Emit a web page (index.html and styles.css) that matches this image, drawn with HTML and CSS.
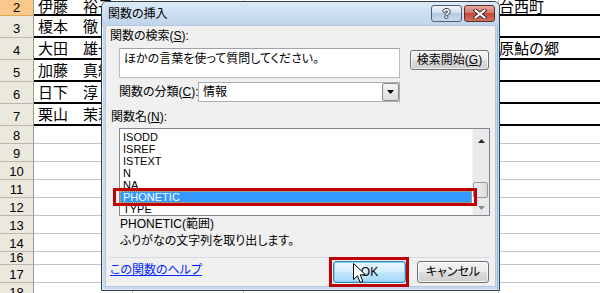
FILE: index.html
```html
<!DOCTYPE html>
<html lang="ja">
<head>
<meta charset="utf-8">
<title>関数の挿入</title>
<link rel="stylesheet" href="styles.css">
</head>
<body>
<div class="sheet">
  <div class="row data first"><div class="rh sel">2</div><div class="c c1">伊藤　裕子</div><div class="c c2"></div><div class="c c3"></div><div class="c c4">台西町</div></div>
  <div class="row data"><div class="rh">3</div><div class="c c1">榎本　徹</div><div class="c c2"></div><div class="c c3"></div><div class="c c4"></div></div>
  <div class="row data"><div class="rh">4</div><div class="c c1">大田　雄一</div><div class="c c2"></div><div class="c c3"></div><div class="c c4">原鮎の郷</div></div>
  <div class="row data"><div class="rh">5</div><div class="c c1">加藤　真紀</div><div class="c c2"></div><div class="c c3"></div><div class="c c4"></div></div>
  <div class="row data"><div class="rh">6</div><div class="c c1">日下　淳</div><div class="c c2"></div><div class="c c3"></div><div class="c c4"></div></div>
  <div class="row data"><div class="rh">7</div><div class="c c1">栗山　茉莉</div><div class="c c2"></div><div class="c c3"></div><div class="c c4"></div></div>
  <div class="row"><div class="rh">8</div><div class="c c1"></div><div class="c c2"></div><div class="c c3"></div><div class="c c4"></div></div>
  <div class="row"><div class="rh">9</div><div class="c c1"></div><div class="c c2"></div><div class="c c3"></div><div class="c c4"></div></div>
  <div class="row"><div class="rh">10</div><div class="c c1"></div><div class="c c2"></div><div class="c c3"></div><div class="c c4"></div></div>
  <div class="row"><div class="rh">11</div><div class="c c1"></div><div class="c c2"></div><div class="c c3"></div><div class="c c4"></div></div>
  <div class="row"><div class="rh">12</div><div class="c c1"></div><div class="c c2"></div><div class="c c3"></div><div class="c c4"></div></div>
  <div class="row"><div class="rh">13</div><div class="c c1"></div><div class="c c2"></div><div class="c c3"></div><div class="c c4"></div></div>
  <div class="row"><div class="rh">14</div><div class="c c1"></div><div class="c c2"></div><div class="c c3"></div><div class="c c4"></div></div>
  <div class="row short"><div class="rh">16</div><div class="c c1"></div><div class="c c2"></div><div class="c c3"></div><div class="c c4"></div></div>
  <div class="row"><div class="rh">17</div><div class="c c1"></div><div class="c c2"></div><div class="c c3"></div><div class="c c4"></div></div>
  <div class="row"><div class="rh">18</div><div class="c c1"></div><div class="c c2"></div><div class="c c3"></div><div class="c c4"></div></div>
</div>

<div class="dialog">
  <div class="titlebar">
    <span class="title">関数の挿入</span>
    <div class="tbtns">
      <span class="tb help">?</span>
      <span class="tb close"><svg width="14" height="10" viewBox="0 0 14 10"><path d="M2.5 1.5 L11.5 8.5 M11.5 1.5 L2.5 8.5" stroke="#3a2a2a" stroke-width="4" stroke-linecap="square"/><path d="M2.5 1.5 L11.5 8.5 M11.5 1.5 L2.5 8.5" stroke="#fff" stroke-width="2" stroke-linecap="square"/></svg></span>
    </div>
  </div>
  <div class="client">
    <div class="lbl l1">関数の検索(<u>S</u>):</div>
    <div class="search-row">
      <div class="textbox">ほかの言葉を使って質問してください。</div>
      <div class="btn go">検索開始(<u>G</u>)</div>
    </div>
    <div class="cat-row">
      <span class="lbl catlbl">関数の分類(<u>C</u>):</span>
      <div class="select"><span class="selval">情報</span><span class="drop"><svg width="7" height="4" viewBox="0 0 7 4"><path d="M0 0 H7 L3.5 4 Z" fill="#000"/></svg></span></div>
    </div>
    <div class="lbl l2">関数名(<u>N</u>):</div>
    <div class="listbox">
      <div class="items">
        <div class="item">ISODD</div>
        <div class="item">ISREF</div>
        <div class="item">ISTEXT</div>
        <div class="item">N</div>
        <div class="item">NA</div>
        <div class="item selected">PHONETIC</div>
        <div class="item">TYPE</div>
      </div>
      <div class="vscroll">
        <div class="sbtn up"><svg width="7" height="4" viewBox="0 0 7 4"><path d="M0 4 H7 L3.5 0 Z" fill="#2a2a2a"/></svg></div>
        <div class="track"><div class="thumb"></div></div>
        <div class="sbtn down"><svg width="7" height="4" viewBox="0 0 7 4"><path d="M0 0 H7 L3.5 4 Z" fill="#8a8a8a"/></svg></div>
      </div>
    </div>
    <div class="desc">PHONETIC(範囲)<br>ふりがなの文字列を取り出します。</div>
    <div class="sep"></div>
    <div class="foot">
      <span class="helplink">この関数のヘルプ</span>
      <div class="btn ok">OK</div>
      <div class="btn cancel">キャンセル</div>
    </div>
  </div>
</div>

<div class="mark mark-list"></div>
<div class="mark mark-ok"></div>
<svg class="cursor" width="14" height="21" viewBox="0 0 14 21"><path d="M0.5 0.5 L0.5 16.5 L4.5 12.8 L7.2 19.5 L9.8 18.4 L7.2 11.8 L12.5 11.8 Z" fill="#fff" stroke="#000" stroke-width="1" stroke-linejoin="miter"/></svg>
</body>
</html>
```

FILE: styles.css
```css
* { box-sizing: border-box; }
html, body { margin: 0; padding: 0; }
body {
  width: 600px;
  height: 293px;
  overflow: hidden;
  position: relative;
  background: #fff;
  font-family: "Liberation Sans", "Noto Sans CJK JP", sans-serif;
  color: #000;
}

/* ---------- spreadsheet ---------- */
.sheet { display: flex; flex-direction: column; width: 600px; }
.row { display: flex; height: 18px; flex: none; }
.row.data { height: 22px; }
.row.first { height: 16px; }
.row.short { height: 13px; }

.rh {
  width: 34px;
  flex: none;
  background: #ebe9de;
  border-right: 1px solid #9e9b8c;
  border-bottom: 1px solid #bdb9a6;
  font-size: 13px;
  line-height: 14px;
  text-align: center;
  padding-top: 3px;
}
.row.data .rh { padding-top: 6px; }
.row.first .rh { padding-top: 1px; }
.row.short .rh { padding-top: 0; line-height: 12px; font-size: 12.5px; }
.rh.sel { background: #f8c98b; border-bottom-color: #e2a85a; }

.c {
  border-bottom: 1px solid #c4c4c4;
  border-right: 1px solid #c4c4c4;
  font-family: "Noto Sans CJK JP", sans-serif;
  font-size: 15px;
  line-height: 20px;
  white-space: nowrap;
  overflow: hidden;
  display: flex;
  align-items: center;
}
.row.data .c { border-bottom: 2px solid #000; }
.row.first .c { align-items: flex-end; line-height: 17px; }
.c1 { width: 99px; padding-left: 4px; flex: none; }
.c2 { width: 111px; flex: none; }
.c3 { width: 255px; flex: none; }
.c4 { flex: 1; border-right: none; padding-left: 0; }

/* ---------- dialog ---------- */
.dialog {
  position: absolute;
  left: 101px;
  top: 1px;
  width: 399px;
  height: 290px;
  border: 1px solid #34404c;
  border-radius: 6px 6px 0 0;
  background: #c6d9ee;
  box-shadow: inset 0 0 0 1px rgba(255,255,255,0.55), inset -2px 0 0 #7fbde6;
  padding: 0 4px 4px 4px;
  display: flex;
  flex-direction: column;
  font-size: 12px;
  font-feature-settings: "palt";
}
.titlebar {
  height: 24px;
  flex: none;
  margin: 0 -4px;
  padding: 0 4px 0 6px;
  display: flex;
  align-items: flex-start;
  justify-content: space-between;
  background: linear-gradient(#dce8f5, #bed4eb);
  border-radius: 5px 5px 0 0;
}
.title { line-height: 12px; margin-top: 5px; font-family: "Noto Sans CJK JP", sans-serif; }
.tbtns { display: flex; gap: 2px; margin-top: 3px; }
.tb {
  width: 31px;
  height: 17px;
  border: 1px solid #4f5d6d;
  border-radius: 3px;
  display: flex;
  align-items: center;
  justify-content: center;
}
.help {
  background: linear-gradient(#eef3fa 0%, #d3e1f0 45%, #b3c9e1 50%, #c9daec 100%);
  color: #fff;
  font-weight: bold;
  font-size: 13px;
  line-height: 13px;
  text-shadow: 1px 0 0 #2f3c4a, -1px 0 0 #2f3c4a, 0 1px 0 #2f3c4a, 0 -1px 0 #2f3c4a;
}
.close {
  border-color: #5a2a26;
  background: linear-gradient(#e8a89d 0%, #d47a6d 45%, #c24a3c 50%, #d5705f 100%);
}

.client {
  flex: 1;
  background: #f0f0f0;
  padding-top: 4px;
  display: flex;
  flex-direction: column;
  box-shadow: 0 0 0 1px #b5c8dc;
}
.lbl { line-height: 12px; white-space: nowrap; }
.l1 { margin-left: 4px; }
.search-row { display: flex; margin-top: 6px; height: 30px; flex: none; }
.textbox {
  margin-left: 13px;
  width: 281px;
  height: 30px;
  background: #fff;
  border: 1px solid #b7bcc4;
  border-top-color: #9ea3ab;
  padding: 4px 0 0 4px;
  line-height: 12px;
}
.btn {
  display: flex;
  align-items: center;
  justify-content: center;
  border: 1px solid #707070;
  border-radius: 3px;
  background: linear-gradient(#f3f3f3 0%, #ebebeb 48%, #dddddd 52%, #cfcfcf 100%);
  box-shadow: inset 0 0 0 1px rgba(255,255,255,0.7);
  white-space: nowrap;
  line-height: 12px;
}
.go { margin-left: 10px; margin-top: 2px; width: 79px; height: 20px; }

.cat-row { display: flex; margin-top: 4px; height: 20px; flex: none; }
.catlbl { margin-left: 13px; width: 79px; line-height: 20px; }
.select {
  width: 202px;
  height: 20px;
  background: #fff;
  border: 1px solid #a9aeb6;
  display: flex;
  justify-content: space-between;
}
.selval { line-height: 18px; padding-left: 4px; }
.drop {
  width: 17px;
  height: 18px;
  border: 1px solid #8b8b8b;
  border-radius: 2px;
  background: linear-gradient(#f4f4f4, #dcdcdc);
  display: flex;
  align-items: center;
  justify-content: center;
}

.l2 { margin-left: 5px; margin-top: 9px; }
.listbox {
  margin-left: 13px;
  margin-top: 5px;
  width: 371px;
  height: 88px;
  flex: none;
  background: #fff;
  border: 1px solid #828790;
  display: flex;
}
.items {
  flex: 1;
  padding-top: 2px;
  font-family: "Liberation Sans", sans-serif;
  font-size: 11px;
}
.item { height: 12px; line-height: 12px; padding-left: 3px; }
.item.selected {
  background: #3399ff;
  color: #fff;
  outline: 1px dotted #f0a030;
  outline-offset: -1px;
}
.vscroll {
  width: 17px;
  flex: none;
  background: #eaeaea;
  border-left: 1px solid #f6f6f6;
  display: flex;
  flex-direction: column;
}
.sbtn { height: 17px; display: flex; align-items: center; justify-content: center; flex: none; }
.sbtn.up { padding-top: 6px; }
.sbtn.down { padding-top: 2px; }
.track { flex: 1; display: flex; flex-direction: column; justify-content: flex-end; }
.thumb {
  height: 16px;
  width: 15px;
  border: 1px solid #979797;
  border-radius: 2px;
  background: linear-gradient(90deg, #f2f2f2, #dcdcdc);
}

.desc { margin-left: 14px; line-height: 17px; font-family: "Liberation Sans", "Noto Sans CJK JP", sans-serif; }
.sep {
  margin-top: 7px;
  margin-left: 4px;
  width: 380px;
  height: 1px;
  flex: none;
  background: #cfdae4;
}
.foot { display: flex; margin-top: 3px; height: 22px; flex: none; }
.helplink {
  color: #0026ff;
  text-decoration: underline;
  margin-left: 4px;
  margin-top: 3px;
  line-height: 12px;
}
.ok {
  margin-left: auto;
  width: 73px;
  height: 22px;
  border-color: #3c7fb1;
  background: linear-gradient(#eaf6fd 0%, #d9f0fc 45%, #bee6fd 55%, #a7d9f5 100%);
  box-shadow: inset 0 0 0 1px #7fd0f8;
}
.cancel { margin-left: 11px; margin-right: 6px; width: 72px; height: 22px; }

/* ---------- annotations ---------- */
.mark { position: absolute; border: 3px solid #c00000; }
.mark-list { left: 113px; top: 188px; width: 364px; height: 18px; }
.mark-ok { left: 329px; top: 257px; width: 80px; height: 30px; }
.cursor { position: absolute; left: 353px; top: 263px; }
```
